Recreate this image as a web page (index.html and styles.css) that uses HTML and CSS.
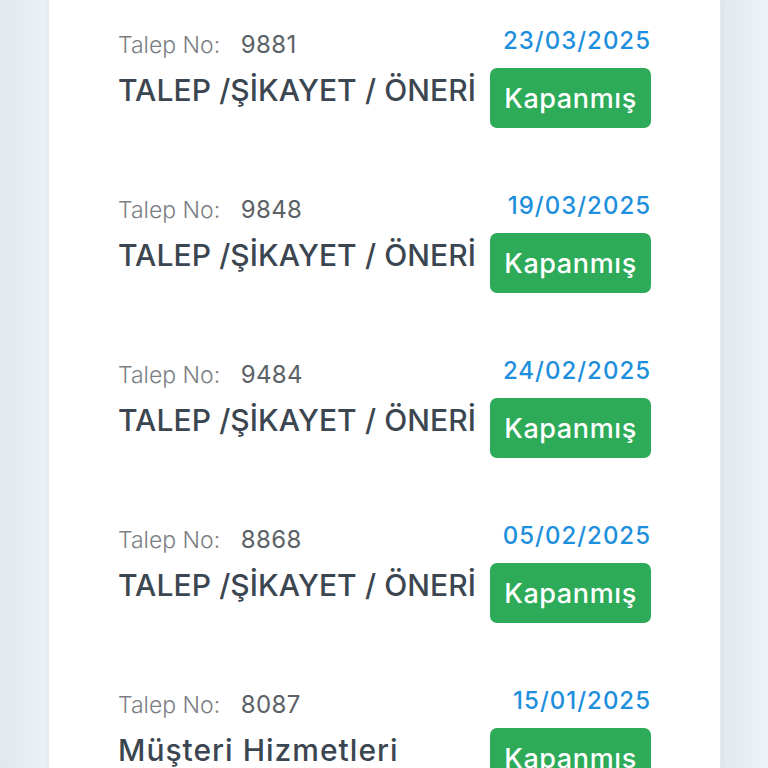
FILE: index.html
```html
<!DOCTYPE html>
<html lang="tr">
<head>
<meta charset="utf-8">
<link rel="stylesheet" href="styles.css">
</head>
<body>
<div class="card">
  <div class="item">
    <div class="left">
      <div class="no"><span class="lbl">Talep No:</span> <span class="num">9881</span></div>
      <div class="title">TALEP /ŞİKAYET / ÖNERİ</div>
    </div>
    <div class="right">
      <div class="date">23/03/2025</div>
      <div class="badge">Kapanmış</div>
    </div>
  </div>
  <div class="item">
    <div class="left">
      <div class="no"><span class="lbl">Talep No:</span> <span class="num">9848</span></div>
      <div class="title">TALEP /ŞİKAYET / ÖNERİ</div>
    </div>
    <div class="right">
      <div class="date">19/03/2025</div>
      <div class="badge">Kapanmış</div>
    </div>
  </div>
  <div class="item">
    <div class="left">
      <div class="no"><span class="lbl">Talep No:</span> <span class="num">9484</span></div>
      <div class="title">TALEP /ŞİKAYET / ÖNERİ</div>
    </div>
    <div class="right">
      <div class="date">24/02/2025</div>
      <div class="badge">Kapanmış</div>
    </div>
  </div>
  <div class="item">
    <div class="left">
      <div class="no"><span class="lbl">Talep No:</span> <span class="num">8868</span></div>
      <div class="title">TALEP /ŞİKAYET / ÖNERİ</div>
    </div>
    <div class="right">
      <div class="date">05/02/2025</div>
      <div class="badge">Kapanmış</div>
    </div>
  </div>
  <div class="item">
    <div class="left">
      <div class="no"><span class="lbl">Talep No:</span> <span class="num">8087</span></div>
      <div class="title title-mixed">Müşteri Hizmetleri</div>
    </div>
    <div class="right">
      <div class="date">15/01/2025</div>
      <div class="badge">Kapanmış</div>
    </div>
  </div>
</div>
</body>
</html>
```
FILE: styles.css
```css
html, body {
  margin: 0;
  padding: 0;
  height: 100%;
  overflow: hidden;
}
body {
  background: linear-gradient(90deg, #e3e8ec 0px, #eaf2f6 45px, #eaf2f6 720px, #e2e8ec 722px, #edf3f6 768px);
  font-family: "Inter", "Noto Sans", sans-serif;
}
.card {
  margin-left: 49px;
  width: 671px;
  height: 100%;
  overflow: hidden;
  background: #ffffff;
  box-shadow: 0 0 6px rgba(40, 60, 80, 0.08);
  padding: 25px 69px 0 69px;
  box-sizing: border-box;
}
.item {
  display: flex;
  justify-content: space-between;
  height: 165px;
}
.left {
  display: flex;
  flex-direction: column;
  padding-top: 4px;
}
.no {
  font-size: 23px;
  line-height: 32px;
  height: 32px;
  white-space: nowrap;
}
.lbl {
  font-weight: 300;
  color: #7b8085;
}
.num {
  margin-left: 14px;
  font-size: 24px;
  font-weight: 400;
  color: #5c6166;
  letter-spacing: 0.4px;
}
.title {
  margin-top: 11px;
  font-size: 30px;
  line-height: 36px;
  font-weight: 500;
  color: #3b4651;
  letter-spacing: 0.1px;
  white-space: nowrap;
}
.title-mixed {
  letter-spacing: 1px;
}
.right {
  display: flex;
  flex-direction: column;
  align-items: flex-end;
}
.date {
  font-size: 24px;
  line-height: 32px;
  font-weight: 500;
  color: #1e8fdd;
  letter-spacing: 1px;
}
.badge {
  margin-top: 11px;
  width: 161px;
  height: 60px;
  box-sizing: border-box;
  display: flex;
  align-items: center;
  justify-content: center;
  background: #2dab58;
  color: #ffffff;
  border-radius: 7px;
  font-size: 27px;
  font-weight: 500;
  letter-spacing: 0.6px;
}
```
